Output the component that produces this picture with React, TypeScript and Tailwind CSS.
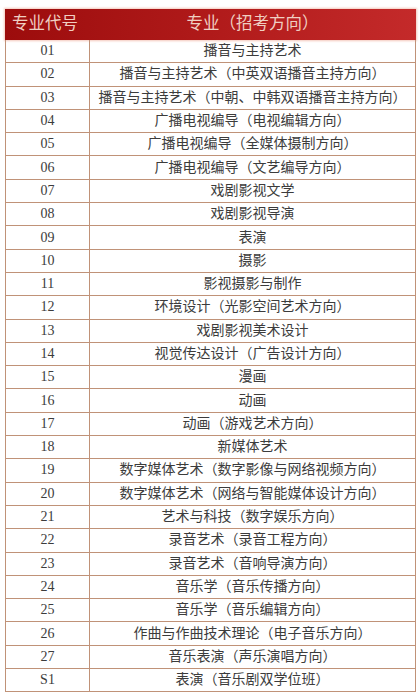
import React from 'react';

const rows: [string, string][] = [
  ['01', '播音与主持艺术'],
  ['02', '播音与主持艺术（中英双语播音主持方向）'],
  ['03', '播音与主持艺术（中朝、中韩双语播音主持方向）'],
  ['04', '广播电视编导（电视编辑方向）'],
  ['05', '广播电视编导（全媒体摄制方向）'],
  ['06', '广播电视编导（文艺编导方向）'],
  ['07', '戏剧影视文学'],
  ['08', '戏剧影视导演'],
  ['09', '表演'],
  ['10', '摄影'],
  ['11', '影视摄影与制作'],
  ['12', '环境设计（光影空间艺术方向）'],
  ['13', '戏剧影视美术设计'],
  ['14', '视觉传达设计（广告设计方向）'],
  ['15', '漫画'],
  ['16', '动画'],
  ['17', '动画（游戏艺术方向）'],
  ['18', '新媒体艺术'],
  ['19', '数字媒体艺术（数字影像与网络视频方向）'],
  ['20', '数字媒体艺术（网络与智能媒体设计方向）'],
  ['21', '艺术与科技（数字娱乐方向）'],
  ['22', '录音艺术（录音工程方向）'],
  ['23', '录音艺术（音响导演方向）'],
  ['24', '音乐学（音乐传播方向）'],
  ['25', '音乐学（音乐编辑方向）'],
  ['26', '作曲与作曲技术理论（电子音乐方向）'],
  ['27', '音乐表演（声乐演唱方向）'],
  ['S1', '表演（音乐剧双学位班）'],
];

const font = { fontFamily: '"Liberation Serif", "Noto Sans CJK SC", serif' };

export default function App() {
  return (
    <div className="w-[420px] h-[699px] bg-white pt-[9px] pl-[5px] pr-[4px]" style={font}>
      <div className="flex h-[31px] items-center bg-gradient-to-r from-[#9c0c0c] via-[#b01a1a] to-[#c42a2a] text-[#f0cfc2] text-[16.5px] shadow-[0_0_2px_1px_#f4c8bc]">
        <div className="w-[84px] pl-[7px]">专业代号</div>
        <div className="flex-1 text-center">专业（招考方向）</div>
      </div>
      <div className="border-l border-r border-[#c09278]">
        {rows.map(([code, name]) => (
          <div key={code} className="flex h-[23.3px] border-b border-[#c09278] text-[14px] text-[#3c3c3c] leading-none">
            <div className="w-[84px] flex items-center justify-center border-r border-[#c09278]">{code}</div>
            <div className="flex-1 flex items-center justify-center">{name}</div>
          </div>
        ))}
      </div>
    </div>
  );
}
